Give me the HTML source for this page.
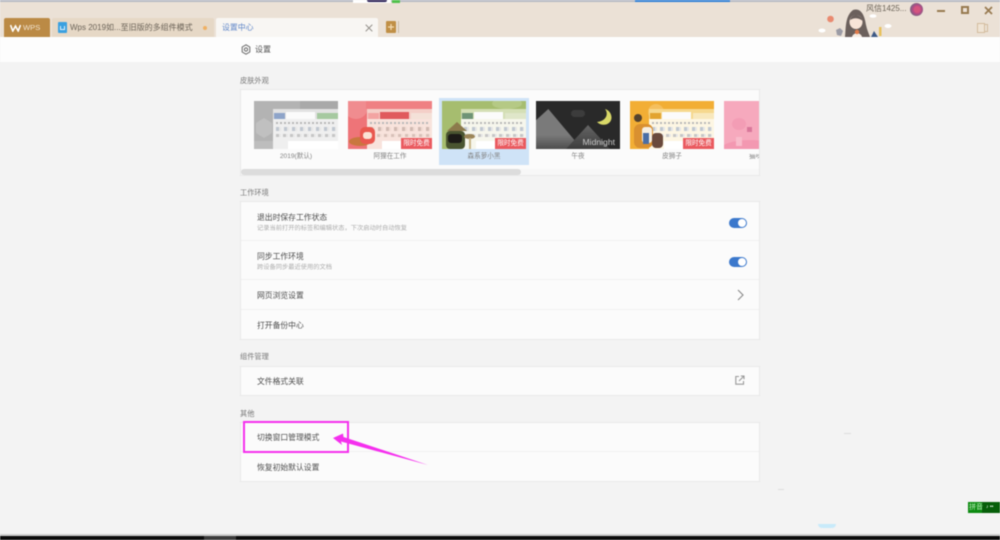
<!DOCTYPE html>
<html lang="zh"><head><meta charset="utf-8"><title>设置中心</title>
<style>
*{box-sizing:border-box}
html,body{margin:0;padding:0;width:1000px;height:540px;overflow:hidden;background:#f3f3f3}
body{font-family:"Liberation Sans","Noto Sans CJK SC",sans-serif;color:#555;position:relative}
#w{position:absolute;left:0;top:0;width:1000px;height:540px;filter:blur(.5px);overflow:hidden}
.a{position:absolute;white-space:nowrap;line-height:1}
.card{position:absolute;left:240px;width:520px;background:#fbfbfb;border:1px solid #e9e9e9}
.sep{position:absolute;left:241px;width:518px;height:1px;background:#f1f1f1}
.sec{font-size:7.2px;color:#777}
.ti{font-size:7.8px;color:#4d4d4d;left:257px}
.sub{font-size:6.25px;color:#acacac;left:257px}
.lab{font-size:6.6px;color:#828282;text-align:center;width:84px}
.th{position:absolute;top:101px;width:84px;height:48px;overflow:hidden}
.win{position:absolute;left:19px;top:8px;width:65px;height:40px;background:#efefef}
.win i{position:absolute;display:block}
.tb0{left:0;top:0;width:65px;height:10px;background:#e2e2e2}
.tb1{left:1px;top:4px;width:11px;height:6px;background:#8ea4c9}
.tb2{left:13px;top:3px;width:29px;height:7px;background:#fbfbfb}
.tb3{left:44px;top:4px;width:21px;height:6px;background:#dfe6dc}
.ln1{left:3px;top:13px;width:58px;height:2px;background:repeating-linear-gradient(90deg,#b8b8b8 0 2px,transparent 2px 4px)}
.ln2{left:3px;top:18px;width:60px;height:4px;background:repeating-linear-gradient(90deg,#c0c7d0 0 3px,#e6e6e6 3px 5px,transparent 5px 8px)}
.ln3{left:3px;top:25px;width:60px;height:3px;background:repeating-linear-gradient(90deg,#c6c6c6 0 3px,#e8e8e8 3px 5px,transparent 5px 7px)}
.wh{left:15px;top:32px;width:50px;height:8px;background:#fff}
.free{position:absolute;right:0;bottom:0;width:31px;height:11px;background:#ea5a5f;color:#fff;font-size:6.6px;line-height:11px;text-align:center}
.tog{position:absolute;left:729px;width:18px;height:10px;border-radius:5px;background:#3b78cc}
.tog b{position:absolute;right:1px;top:1px;width:8px;height:8px;border-radius:50%;background:#fff}
</style></head><body><div id="w">

<!-- title bar -->
<div class="a" style="left:0;top:0;width:1000px;height:37px;background:#ebe1d6"></div>
<div class="a" style="left:0;top:0;width:1000px;height:2px;background:#b7bbc4"></div>
<div class="a" style="left:635px;top:0;width:95px;height:2px;background:#2f7fd6"></div>
<div class="a" style="left:353px;top:0;width:38px;height:3px;background:#fff"></div>
<div class="a" style="left:367px;top:0;width:20px;height:2px;border-radius:0 0 8px 8px;background:#2a1f55"></div>
<div class="a" style="left:392px;top:0;width:8px;height:3px;background:#4fc14b"></div>

<!-- tabs -->
<div class="a" style="left:4px;top:18px;width:46px;height:19px;background:#bb8a45;border-radius:2px 2px 0 0"></div>
<svg class="a" style="left:10px;top:24px" width="11" height="8" viewBox="0 0 11 8"><path d="M.5 1 2.800 7 5.500 2 8.200 7 10.500 1" fill="none" stroke="#fff" stroke-width="1.600"/></svg>
<div class="a" style="left:23px;top:24px;font-size:7.6px;color:#f1e3cf">WPS</div>
<div class="a" style="left:52px;top:18px;width:162px;height:19px;background:#e6d8c6;border-radius:2px 2px 0 0"></div>
<div class="a" style="left:58px;top:22px;width:9px;height:11px;background:#3aa0e0;border-radius:1px"></div>
<div class="a" style="left:60px;top:26px;width:5px;height:4px;border:1px solid #dff1fb;border-top:0"></div>
<div class="a" style="left:70px;top:24px;font-size:8px;color:#6a6257">Wps 2019如...至旧版的多组件模式</div>
<div class="a" style="left:203px;top:26px;width:4px;height:4px;border-radius:50%;background:#efb063"></div>
<div class="a" style="left:216px;top:18px;width:162px;height:19px;background:#f8f6f3;border-radius:2px 2px 0 0"></div>
<div class="a" style="left:222px;top:24px;font-size:7.9px;color:#5f86c8">设置中心</div>
<svg class="a" style="left:365px;top:24px" width="8" height="8" viewBox="0 0 8 8"><path d="M.7.7 7.300 7.300M7.300.7.7 7.300" stroke="#8d8a84" stroke-width="1"/></svg>
<div class="a" style="left:386px;top:21px;width:10px;height:12px;background:#c08f45;border-radius:1px"></div>
<svg class="a" style="left:388px;top:24px" width="6" height="6" viewBox="0 0 6 6"><path d="M3 0V6M0 3H6" stroke="#f4dcb4" stroke-width="1.200"/></svg>
<div class="a" style="left:398px;top:21px;width:1px;height:12px;background:#cbbba5"></div>

<!-- illustration -->
<svg class="a" style="left:815px;top:8px" width="100" height="29" viewBox="0 0 100 29">
<circle cx="15.500" cy="11" r="3.300" fill="#e98a70"/>
<ellipse cx="7" cy="22.500" rx="3.500" ry="2" fill="#fff"/>
<ellipse cx="58" cy="8" rx="3.500" ry="1.800" fill="#fff"/>
<ellipse cx="73" cy="18" rx="3.500" ry="2" fill="#fff"/>
<path d="M30 29C31 20 30 8 38 2 47-1 50 10 51 17 52 22 54 26 55 29Z" fill="#6b605c"/>
<ellipse cx="41" cy="14" rx="6.500" ry="7" fill="#f7e4d7"/>
<path d="M35 12C37 5 45 5 48 13 44 10 40 9 35 12Z" fill="#6b605c"/>
<path d="M37 29C38 24 46 24 47 29Z" fill="#f5e9df"/>
<circle cx="42" cy="24" r="2.200" fill="#e07a4a"/>
<path d="M21 22 25 20 28 23 26 28 22 27Z" fill="#9b9ba5"/>
<path d="M56 29 59 23 63 29Z" fill="#3e5a86"/>
<rect x="64" y="19" width="2.500" height="9" fill="#e8c15c"/>
</svg>
<div class="a" style="left:866px;top:5px;font-size:8px;color:#6a6257">风信1425...</div>
<div class="a" style="left:910px;top:3px;width:13px;height:13px;border-radius:50%;background:radial-gradient(circle at 55% 50%,#d4557f 0 3px,#b84a86 4px,#7a6580 7px)"></div>
<div class="a" style="left:937px;top:10px;width:8px;height:2px;background:#97794f"></div>
<div class="a" style="left:961px;top:6px;width:8px;height:8px;border:2px solid #97794f"></div>
<svg class="a" style="left:984px;top:6px" width="9" height="9" viewBox="0 0 9 9"><path d="M1 1 8 8M8 1 1 8" stroke="#97794f" stroke-width="1.700"/></svg>
<div class="a" style="left:977px;top:23px;width:8px;height:10px;border:1px solid #d3bc9e;background:#efe4d5"></div>
<div class="a" style="left:985px;top:24px;width:3px;height:8px;border:1px solid #d3bc9e;border-left:0"></div>

<!-- header -->
<div class="a" style="left:0;top:37px;width:1000px;height:25px;background:#fdfdfd"></div>
<svg class="a" style="left:241px;top:44px" width="10" height="11" viewBox="0 0 10 11"><path d="M5 .8 8.800 3V8L5 10.200 1.200 8V3Z" fill="none" stroke="#666" stroke-width="1"/><circle cx="5" cy="5.500" r="1.600" fill="none" stroke="#666"/></svg>
<div class="a" style="left:255px;top:46px;font-size:8px;color:#555">设置</div>

<!-- skins -->
<div class="a sec" style="left:240px;top:77px">皮肤外观</div>
<div class="card" style="top:89px;height:87px"></div>
<div class="a" style="left:439px;top:98px;width:90px;height:67px;background:#cfe3f7"></div>

<div class="th" style="left:254px;background:linear-gradient(90deg,#b3b3b3 0 55%,#a9a9a9 55%)">
<div class="a" style="left:2px;top:17px;width:16px;height:20px;background:#c0c0c0;clip-path:polygon(50% 0,100% 25%,100% 75%,50% 100%,0 75%,0 25%)"></div>
<div class="a" style="left:0;top:40px;width:19px;height:8px;background:#bdbdbd"></div>
<div class="win"><i class="tb0"></i><i class="tb1"></i><i class="tb2"></i><i class="tb3" style="background:#a6c9a0"></i><i class="ln1"></i><i class="ln2"></i><i class="ln3"></i><i class="wh"></i></div></div>

<div class="th" style="left:348px;background:#ee7478">
<div class="a" style="left:-4px;top:-6px;width:24px;height:24px;border-radius:50%;background:#f08c8f"></div>
<div class="a" style="left:18px;top:0;width:66px;height:8px;background:#ef8083"></div>
<div class="win" style="background:#f8e3dc"><i class="tb0" style="background:#f4cfc8"></i><i class="tb1" style="background:#f3a4a2"></i><i class="tb2" style="background:#e05a5d"></i><i class="tb3" style="background:#f4e1d8"></i><i class="ln1"></i><i class="ln2" style="background:repeating-linear-gradient(90deg,#d0bab2 0 3px,#f0dad2 3px 5px,transparent 5px 8px)"></i><i class="ln3" style="background:repeating-linear-gradient(90deg,#d8c0b8 0 3px,#f1ded6 3px 5px,transparent 5px 7px)"></i><i class="wh"></i></div>
<div class="a" style="left:1px;top:36px;width:22px;height:9px;border-radius:50%;background:#c9773f"></div>
<div class="a" style="left:12px;top:26px;width:15px;height:17px;border-radius:5px;background:#e9584f"></div>
<div class="a" style="left:15px;top:31px;width:9px;height:7px;background:#fbe2d4;border-radius:3px"></div>
<div class="free">限时免费</div></div>

<div class="th" style="left:442px;background:#a6bd6f">
<div class="a" style="left:50px;top:-3px;width:30px;height:11px;border-radius:50%;background:#b5c985"></div>
<div class="win" style="background:#f6f6ec"><i class="tb0" style="background:#d4dfb5"></i><i class="tb1" style="background:#6f9476"></i><i class="tb2"></i><i class="tb3" style="background:#dfe6c9"></i><i class="ln1"></i><i class="ln2"></i><i class="ln3"></i><i class="wh"></i></div>
<div class="a" style="left:5px;top:21px;width:20px;height:9px;background:#8c7a4c;clip-path:polygon(50% 0,100% 100%,0 100%)"></div>
<div class="a" style="left:4px;top:30px;width:19px;height:18px;background:#4a5530;border-radius:4px"></div>
<div class="a" style="left:6px;top:33px;width:14px;height:9px;background:#1d1b17;border-radius:3px"></div>
<div class="a" style="left:22px;top:33px;width:11px;height:5px;background:#9c8558;border-radius:50%"></div>
<div class="a" style="left:27px;top:37px;width:2px;height:11px;background:#c8b78a"></div>
<div class="free">限时免费</div></div>

<div class="th" style="left:536px;background:#292929">
<div class="a" style="left:0;top:8px;width:56px;height:40px;background:linear-gradient(180deg,#7a7a7a 0 65%,#4d4d4d);clip-path:polygon(0 28%,22% 0,82% 100%,0 100%)"></div>
<div class="a" style="left:30px;top:24px;width:44px;height:24px;background:linear-gradient(180deg,#666,#3c3c3c);clip-path:polygon(50% 0,100% 100%,0 100%)"></div>
<div class="a" style="left:35px;top:9px;width:14px;height:7px;border-radius:5px;background:#3c3c3c"></div>
<svg class="a" style="left:60px;top:8px" width="16" height="17" viewBox="0 0 16 17"><path d="M9 0C13 5 10 12 1 13 6 18 15 16 15.500 9 15.700 5 13 1 9 0Z" fill="#d9d868"/></svg>
<div class="a" style="right:5px;top:37px;font-size:8.6px;color:#c9c9c9">Midnight</div></div>

<div class="th" style="left:630px;background:#f2ae35">
<div class="a" style="left:18px;top:3px;width:16px;height:16px;border-radius:50%;background:#f5bf5d"></div>
<div class="win" style="background:#fdf6e3"><i class="tb0" style="background:#f6d88e"></i><i class="tb1" style="background:#e2a32f"></i><i class="tb2"></i><i class="tb3" style="background:#f8e8bd"></i><i class="ln1"></i><i class="ln2"></i><i class="ln3"></i><i class="wh"></i></div>
<div class="a" style="left:4px;top:23px;width:19px;height:24px;background:#d99030;border-radius:6px"></div>
<div class="a" style="left:12px;top:26px;width:10px;height:16px;background:#f6efe2;border-radius:3px"></div>
<div class="a" style="left:13px;top:32px;width:6px;height:11px;background:#4a6ea5"></div>
<div class="a" style="left:22px;top:32px;width:11px;height:15px;background:#6a4a3c;border-radius:4px"></div>
<div class="a" style="left:4px;top:13px;width:8px;height:8px;background:#54422e;border-radius:50%"></div>
<div class="free">限时免费</div></div>

<div class="th" style="left:724px;width:35px;background:#f6a9bd">
<div class="a" style="left:-4px;top:39px;width:60px;height:20px;border-radius:50%;background:#f398b1"></div>
<div class="a" style="left:12px;top:36px;width:6px;height:9px;background:#f8bccb"></div>
<div class="a" style="left:8px;top:17px;width:14px;height:12px;border-radius:50%;background:#f39db5"></div>
<div class="a" style="left:23px;top:26px;width:5px;height:5px;background:#d9789a"></div>
</div>

<div class="a lab" style="left:254px;top:154px">2019(默认)</div>
<div class="a lab" style="left:348px;top:154px">阿狸在工作</div>
<div class="a lab" style="left:442px;top:154px">森系萝小黑</div>
<div class="a lab" style="left:536px;top:154px">午夜</div>
<div class="a lab" style="left:630px;top:154px">皮狮子</div>
<div class="a lab" style="left:724px;top:154px;width:35px;overflow:hidden;text-align:left;padding-left:25px">猫咪</div>
<div class="a" style="left:241px;top:169px;width:518px;height:6px;background:#f7f7f7"></div>
<div class="a" style="left:241px;top:169px;width:280px;height:6px;background:#dcdcdc;border-radius:3px"></div>

<!-- work -->
<div class="a sec" style="left:240px;top:189px">工作环境</div>
<div class="card" style="top:201px;height:139px"></div>
<div class="sep" style="top:240px"></div><div class="sep" style="top:279px"></div><div class="sep" style="top:309px"></div>
<div class="a ti" style="top:214px">退出时保存工作状态</div>
<div class="a sub" style="top:226px">记录当前打开的标签和编辑状态，下次启动时自动恢复</div>
<div class="a ti" style="top:253px">同步工作环境</div>
<div class="a sub" style="top:265px">跨设备同步最近使用的文档</div>
<div class="a ti" style="top:292px">网页浏览设置</div>
<div class="a ti" style="top:322px">打开备份中心</div>
<div class="tog" style="top:218px"><b></b></div>
<div class="tog" style="top:257px"><b></b></div>
<svg class="a" style="left:737px;top:289px" width="7" height="12" viewBox="0 0 7 12"><path d="M1 1 6 6 1 11" fill="none" stroke="#8a8a8a" stroke-width="1.100"/></svg>

<!-- components -->
<div class="a sec" style="left:240px;top:353px">组件管理</div>
<div class="card" style="top:366px;height:30px"></div>
<div class="a ti" style="top:378px">文件格式关联</div>
<svg class="a" style="left:735px;top:375px" width="10" height="10" viewBox="0 0 10 10"><path d="M4 1.500H.8V9.200H8.500V6M4 6 9 1M5.800 1H9V4.200" fill="none" stroke="#999" stroke-width="1.100"/></svg>

<!-- other -->
<div class="a sec" style="left:240px;top:410px">其他</div>
<div class="card" style="top:422px;height:60px"></div>
<div class="sep" style="top:451px"></div>
<div class="a ti" style="top:434px">切换窗口管理模式</div>
<div class="a ti" style="top:464px">恢复初始默认设置</div>

<!-- annotation -->
<div class="a" style="left:243px;top:421px;width:106px;height:32px;border:2px solid #f52fee"></div>
<svg class="a" style="left:330px;top:430px" width="100" height="40" viewBox="0 0 100 40"><path d="M3 8 13 3.500 13.500 7 98 35 11 11.500 12 15Z" fill="#f52fee"/></svg>

<!-- bits -->
<div class="a" style="left:844px;top:433px;width:7px;height:1px;background:#ddd"></div>
<div class="a" style="left:778px;top:489px;width:6px;height:1px;background:#ddd"></div>
<div class="a" style="left:818px;top:524px;width:18px;height:4px;border-radius:0 0 9px 9px;background:#c8eafa"></div>
<div class="a" style="left:968px;top:502px;width:32px;height:11px;background:#0c8a10"></div>
<div class="a" style="left:982px;top:502px;width:18px;height:11px;background:#075f0a"></div>
<div class="a" style="left:969px;top:503px;font-size:7px;color:#bff0bf;line-height:9px">拼音</div>
<div class="a" style="left:986px;top:505px;font-size:5px;color:#fff">♪ ••</div>

<!-- taskbar -->
<div class="a" style="left:0;top:534px;width:1000px;height:2px;background:#cfcfcf"></div>
<div class="a" style="left:0;top:536px;width:1000px;height:4px;background:#0b0b0b"></div>
<div class="a" style="left:204px;top:536px;width:32px;height:4px;background:#3b3b3b"></div>
</div></body></html>
